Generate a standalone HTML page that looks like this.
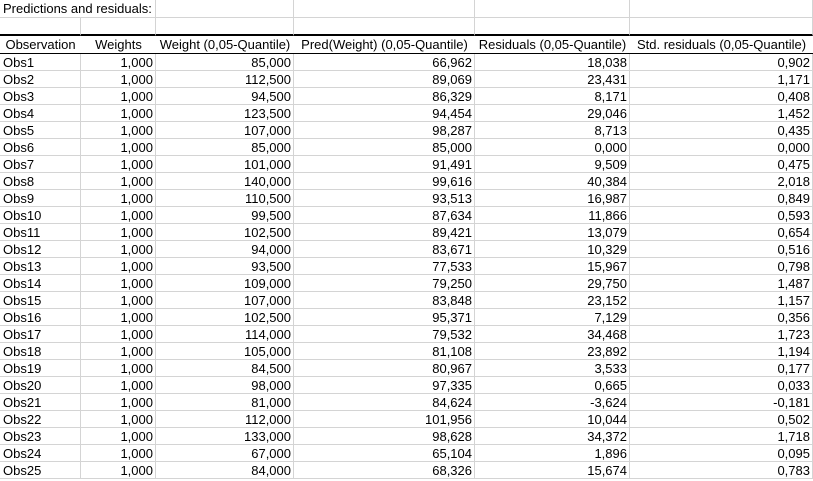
<!DOCTYPE html>
<html><head><meta charset="utf-8"><style>
*{margin:0;padding:0;box-sizing:border-box}
body{width:813px;height:481px;background:#fff;font-family:"Liberation Sans",Arial,sans-serif;font-size:13px;color:#000;position:relative;overflow:hidden}
.r{position:absolute;left:0;width:813px;height:17px}
.c{position:absolute;top:0;height:100%;border-right:1px solid #d4d4d4;border-bottom:1px solid #d4d4d4;line-height:17px;white-space:nowrap;padding:0 2px;text-align:right}
.c0{left:0;width:81px;text-align:left;padding-left:3px}
.c1{left:81px;width:75px}
.c2{left:156px;width:138px}
.c3{left:294px;width:181px}
.c4{left:475px;width:155px}
.c5{left:630px;width:183px}
.h .c{border-bottom:1px solid #000;border-right:none;text-align:center;padding:0}
</style></head><body>
<div class="r" style="top:0;height:18px"><div class="c" style="left:0;width:156px;text-align:left;line-height:18px;padding-left:3px">Predictions and residuals:</div><div class="c c2"></div><div class="c c3"></div><div class="c c4"></div><div class="c c5"></div></div>
<div class="r" style="top:18px;height:18px"><div class="c c0" style="border-bottom:2px solid #000"></div><div class="c c1" style="border-bottom:2px solid #000"></div><div class="c c2" style="border-bottom:2px solid #000"></div><div class="c c3" style="border-bottom:2px solid #000"></div><div class="c c4" style="border-bottom:2px solid #000"></div><div class="c c5" style="border-bottom:2px solid #000"></div></div>
<div class="r h" style="top:36px;height:18px"><div class="c c0" style="line-height:18px">Observation</div><div class="c c1" style="line-height:18px">Weights</div><div class="c c2" style="line-height:18px">Weight (0,05-Quantile)</div><div class="c c3" style="line-height:18px">Pred(Weight) (0,05-Quantile)</div><div class="c c4" style="line-height:18px">Residuals (0,05-Quantile)</div><div class="c c5" style="line-height:18px">Std. residuals (0,05-Quantile)</div></div>
<div id="d"></div>
<script>
var D=[["85,000","66,962","18,038","0,902"],["112,500","89,069","23,431","1,171"],["94,500","86,329","8,171","0,408"],["123,500","94,454","29,046","1,452"],["107,000","98,287","8,713","0,435"],["85,000","85,000","0,000","0,000"],["101,000","91,491","9,509","0,475"],["140,000","99,616","40,384","2,018"],["110,500","93,513","16,987","0,849"],["99,500","87,634","11,866","0,593"],["102,500","89,421","13,079","0,654"],["94,000","83,671","10,329","0,516"],["93,500","77,533","15,967","0,798"],["109,000","79,250","29,750","1,487"],["107,000","83,848","23,152","1,157"],["102,500","95,371","7,129","0,356"],["114,000","79,532","34,468","1,723"],["105,000","81,108","23,892","1,194"],["84,500","80,967","3,533","0,177"],["98,000","97,335","0,665","0,033"],["81,000","84,624","-3,624","-0,181"],["112,000","101,956","10,044","0,502"],["133,000","98,628","34,372","1,718"],["67,000","65,104","1,896","0,095"],["84,000","68,326","15,674","0,783"]];
var h="";for(var i=0;i<D.length;i++){var t=54+i*17;h+='<div class="r" style="top:'+t+'px"><div class="c c0">Obs'+(i+1)+'</div><div class="c c1">1,000</div><div class="c c2">'+D[i][0]+'</div><div class="c c3">'+D[i][1]+'</div><div class="c c4">'+D[i][2]+'</div><div class="c c5">'+D[i][3]+'</div></div>';}
document.getElementById("d").innerHTML=h;
</script>
</body></html>
